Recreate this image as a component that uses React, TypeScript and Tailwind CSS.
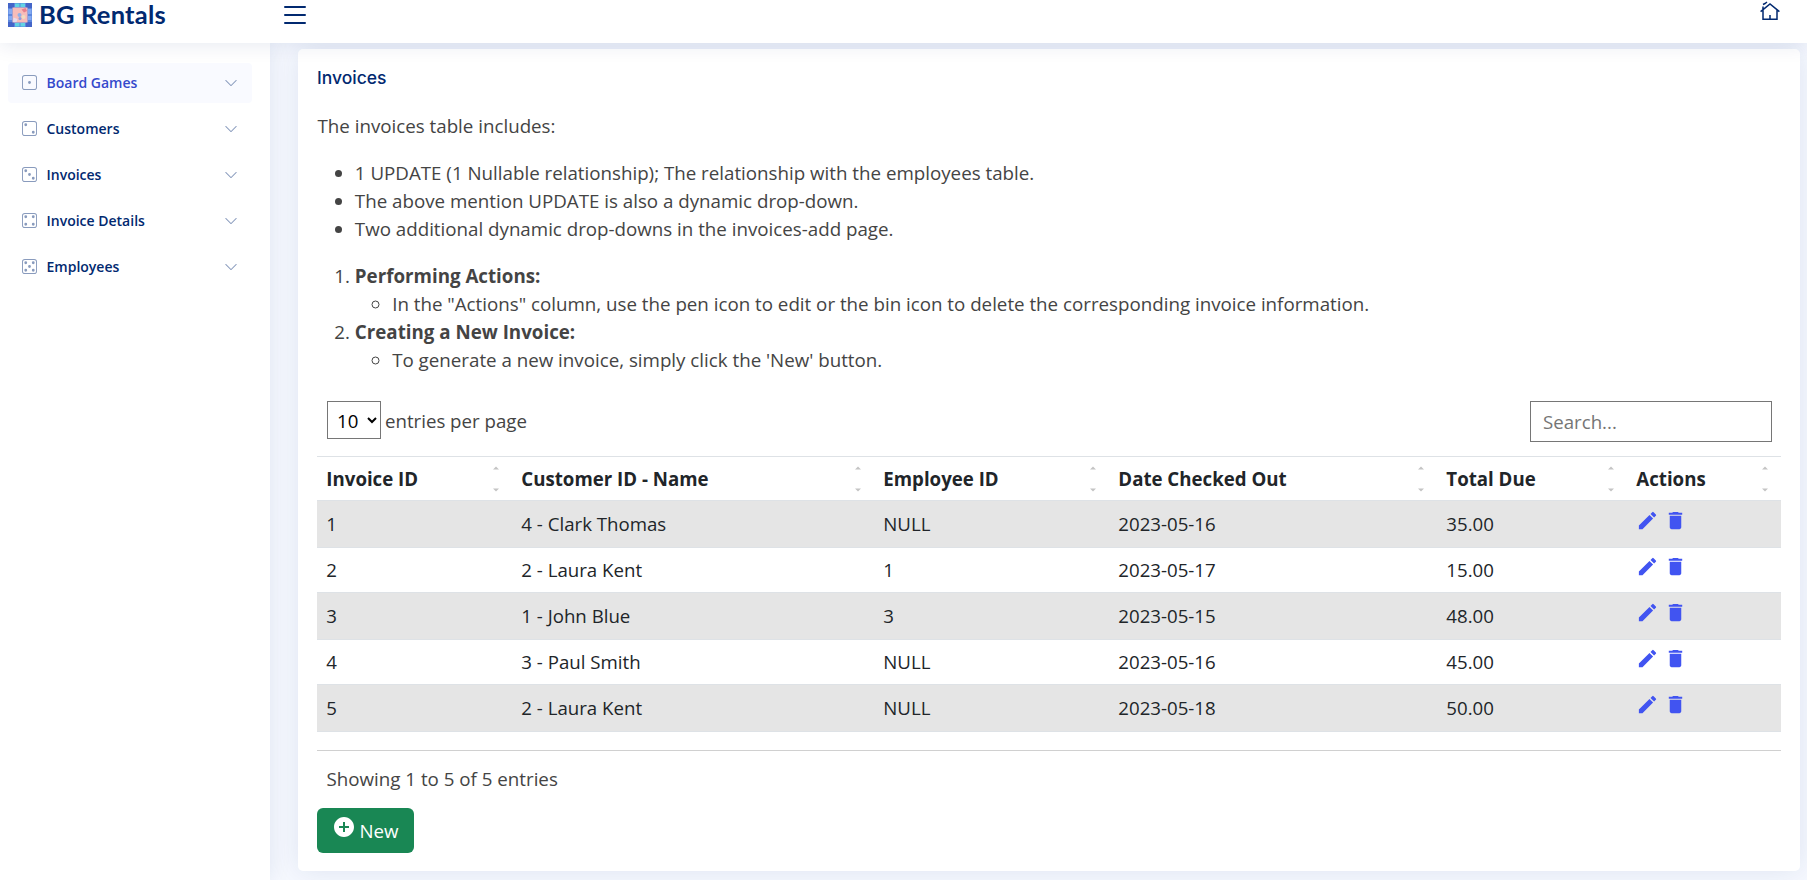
import { BsDice1, BsDice2, BsDice3, BsDice4, BsDice5, BsChevronDown, BsList } from "react-icons/bs";
import { MdEdit, MdDelete, MdAddCircle } from "react-icons/md";

const nav = [
  { label: "Board Games", Icon: BsDice1, active: true },
  { label: "Customers", Icon: BsDice2, active: false },
  { label: "Invoices", Icon: BsDice3, active: false },
  { label: "Invoice Details", Icon: BsDice4, active: false },
  { label: "Employees", Icon: BsDice5, active: false },
];

const columns = [
  { label: "Invoice ID", width: "w-[195px]" },
  { label: "Customer ID - Name", width: "w-[362px]" },
  { label: "Employee ID", width: "w-[235px]" },
  { label: "Date Checked Out", width: "w-[328px]" },
  { label: "Total Due", width: "w-[190px]" },
  { label: "Actions", width: "w-[154px]" },
];

const rows = [
  ["1", "4 - Clark Thomas", "NULL", "2023-05-16", "35.00"],
  ["2", "2 - Laura Kent", "1", "2023-05-17", "15.00"],
  ["3", "1 - John Blue", "3", "2023-05-15", "48.00"],
  ["4", "3 - Paul Smith", "NULL", "2023-05-16", "45.00"],
  ["5", "2 - Laura Kent", "NULL", "2023-05-18", "50.00"],
];

function Logo() {
  return (
    <svg width="24" height="24" viewBox="0 0 24 24" className="shrink-0">
      <rect width="24" height="24" rx="1.5" fill="#5b86de" />
      <path d="M0 0h6v5H0zM18 0h6v5h-6zM0 19h6v5H0zM18 19h6v5h-6z" fill="#4465c8" />
      <path d="M7 0.5h4.500v3.500H7zM12.500 0.500h4.500v3.500h-4.500zM7 20h4.500v3.500H7zM12.500 20h4.500v3.500h-4.500z" fill="#62d3e2" />
      <path d="M0.500 6h3.500v5H0.500zM0.500 13h3.500v4H0.500zM20 6h3.500v5H20zM20 13h3.500v4H20z" fill="#84aaf2" />
      <rect x="4.500" y="4.500" width="15" height="15" fill="#f7bcb9" />
      <path d="M13.500 6.500l4-1.500 1.500 3-3 1.500z" fill="#e7808f" />
      <path d="M5.500 14.500l4 1.500-1 3H5z" fill="#e6dcee" />
      <circle cx="11.500" cy="12" r="2" fill="#8fb0ea" />
      <circle cx="15.500" cy="14" r="2" fill="#f0dcc0" />
      <circle cx="12" cy="15.500" r="1.500" fill="#8c9fe0" />
    </svg>
  );
}

function SortArrows() {
  return (
    <svg width="6" height="26" viewBox="0 0 6 26" className="shrink-0" fill="#c4c4c4">
      <path d="M0 3.5L3 0.5L6 3.5zM0 22.5L3 25.5L6 22.5z" />
    </svg>
  );
}

export default function App() {
  return (
    <div className="flex h-[880px] w-full flex-col overflow-hidden bg-[#f6f9ff] font-['Open_Sans',sans-serif] text-[#444444]">
      <header className="relative z-20 flex h-[43px] shrink-0 items-start justify-between bg-white pr-[27px] pl-2 shadow-[0_2px_20px_rgba(1,41,112,0.1)]">
        <div className="flex h-[30px] items-center">
          <div className="flex w-[271px] items-center gap-[7px]">
            <Logo />
            <span className="pb-[2px] font-[Lato,sans-serif] text-[25.5px] leading-[28px] font-bold tracking-[0.2px] whitespace-nowrap text-[#012970]">BG Rentals</span>
          </div>
          <BsList className="size-8 text-[#012970]" />
        </div>
        <svg width="20" height="20" viewBox="0 0 20 20" className="mt-[1px]" fill="none" stroke="#012970" strokeWidth="1.5">
          <path d="M0.6 10.6L10 3l9.400 7.600M3 9v9.200h14V9M10 18.200V14M3 8.500V5.500M3 3.500l2-1 2-1.500" />
        </svg>
      </header>
      <div className="flex min-h-0 flex-1">
        <nav className="relative z-10 flex w-[270px] shrink-0 flex-col gap-[6px] bg-white pt-[19.500px] pr-[18.500px] pl-2 shadow-[0_0_20px_rgba(1,41,112,0.1)]">
          {nav.map(({ label, Icon, active }) => (
            <a key={label} className={`flex h-10 items-center rounded px-[14px] text-[14px] font-semibold ${active ? "bg-[#f9faff] text-[#3549cc]" : "text-[#012970]"}`}>
              <Icon className="mr-[9.500px] size-[15px] text-[#899bbd]" />
              <span>{label}</span>
              <BsChevronDown className="ml-auto size-[14px] text-[#899bbd]" />
            </a>
          ))}
        </nav>
        <main className="min-w-0 flex-1 pt-[6px] pr-[7px] pl-7">
          <section className="h-[822px] rounded-[5px] bg-white px-[19px] text-[18.67px] leading-7 shadow-[0_0_30px_rgba(1,41,112,0.1)]">
            <h1 className="pt-[18px] font-[Inter,sans-serif] text-[17.5px] leading-[22px] font-medium text-[#012970]">Invoices</h1>
            <div className="pl-[0.500px] text-[18.74px]">
              <p className="pt-[23px]">The invoices table includes:</p>
              <ul className="list-disc pt-[19px] pl-[37.33px]">
                <li>1 UPDATE (1 Nullable relationship); The relationship with the employees table.</li>
                <li>The above mention UPDATE is also a dynamic drop-down.</li>
                <li>Two additional dynamic drop-downs in the invoices-add page.</li>
              </ul>
              <ol className="list-decimal pt-[19px] pl-[37.33px]">
                <li>
                  <strong className="font-bold">Performing Actions:</strong>
                  <ul className="list-[circle] pl-[37.33px]">
                    <li>In the "Actions" column, use the pen icon to edit or the bin icon to delete the corresponding invoice information.</li>
                  </ul>
                </li>
                <li>
                  <strong className="font-bold">Creating a New Invoice:</strong>
                  <ul className="list-[circle] pl-[37.33px]">
                    <li>To generate a new invoice, simply click the 'New' button.</li>
                  </ul>
                </li>
              </ol>
            </div>
            <div className="flex items-start justify-between pt-[27px] pr-[9px] pl-[10px]">
              <label className="flex items-center gap-[4px]">
                <select className="h-[38px] w-[54px] border border-[#767676] bg-white pl-[5px] text-black">
                  <option>10</option>
                </select>
                <span className="pt-[2px]">entries per page</span>
              </label>
              <input placeholder="Search..." className="h-[41px] w-[242px] border border-[#767676] px-3 placeholder:text-[#757575]" />
            </div>
            <div className="mt-[14px] border-b border-[#d0d0d0] pb-[18px]">
              <table className="w-full table-fixed border-collapse border-t border-[#dee2e6] text-[#212529]">
                <thead>
                  <tr className="h-[44px] border-b border-[#dee2e6]">
                    {columns.map((c) => (
                      <th key={c.label} className={`${c.width} p-0 pr-[13.500px] pl-[9.330px] text-left font-bold`}>
                        <div className="flex items-center justify-between whitespace-nowrap">
                          {c.label}
                          <SortArrows />
                        </div>
                      </th>
                    ))}
                  </tr>
                </thead>
                <tbody>
                  {rows.map((r) => (
                    <tr key={r[0]} className="border-b border-[#dee2e6] odd:h-[47px] odd:bg-[#e5e5e5] even:h-[45px]">
                      {r.map((v, i) => (
                        <td key={i} className="p-0 pl-[9.330px]">{v}</td>
                      ))}
                      <td className="p-0 pl-[9px]">
                        <div className="flex gap-[4.500px] pb-[7px] text-[#4154f1]">
                          <MdEdit className="size-[23px]" />
                          <MdDelete className="size-[23px]" />
                        </div>
                      </td>
                    </tr>
                  ))}
                </tbody>
              </table>
            </div>
            <p className="px-[9.500px] pt-[14px] text-[18.74px]">Showing 1 to 5 of 5 entries</p>
            <button className="mt-[15px] flex h-[45px] w-[97px] items-center rounded-[6px] bg-[#198754] pl-[15px] text-white">
              <MdAddCircle className="mb-[8px] size-6" />
              <span className="pl-[3.500px]">New</span>
            </button>
          </section>
        </main>
      </div>
    </div>
  );
}
